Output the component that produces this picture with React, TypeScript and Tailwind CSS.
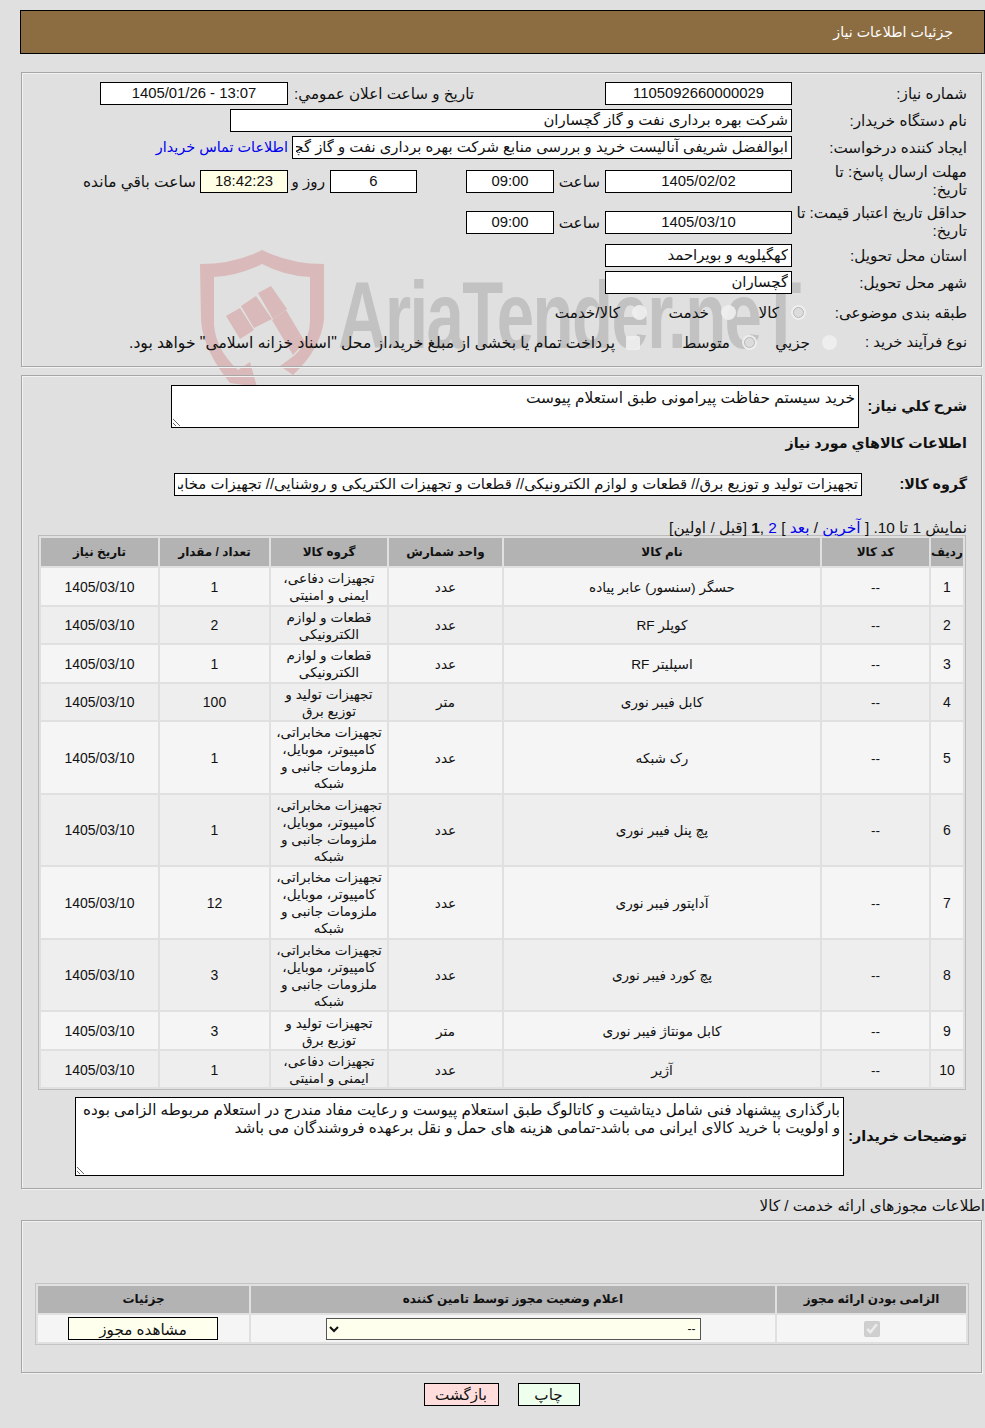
import React from "react";

const rows = [
  ["1", "--", "حسگر (سنسور) عابر پیاده", "عدد", "تجهیزات دفاعی، ایمنی و امنیتی", "1", "1405/03/10"],
  ["2", "--", "کوپلر RF", "عدد", "قطعات و لوازم الکترونیکی", "2", "1405/03/10"],
  ["3", "--", "اسپلیتر RF", "عدد", "قطعات و لوازم الکترونیکی", "1", "1405/03/10"],
  ["4", "--", "کابل فیبر نوری", "متر", "تجهیزات تولید و توزیع برق", "100", "1405/03/10"],
  ["5", "--", "رک شبکه", "عدد", "تجهیزات مخابراتی، کامپیوتر، موبایل، ملزومات جانبی و شبکه", "1", "1405/03/10"],
  ["6", "--", "پچ پنل فیبر نوری", "عدد", "تجهیزات مخابراتی، کامپیوتر، موبایل، ملزومات جانبی و شبکه", "1", "1405/03/10"],
  ["7", "--", "آداپتور فیبر نوری", "عدد", "تجهیزات مخابراتی، کامپیوتر، موبایل، ملزومات جانبی و شبکه", "12", "1405/03/10"],
  ["8", "--", "پچ کورد فیبر نوری", "عدد", "تجهیزات مخابراتی، کامپیوتر، موبایل، ملزومات جانبی و شبکه", "3", "1405/03/10"],
  ["9", "--", "کابل مونتاژ فیبر نوری", "متر", "تجهیزات تولید و توزیع برق", "3", "1405/03/10"],
  ["10", "--", "آژیر", "عدد", "تجهیزات دفاعی، ایمنی و امنیتی", "1", "1405/03/10"],
];

const Box = ({ className = "", children }: { className?: string; children: React.ReactNode }) => (
  <div className={`h-[23px] shrink-0 border border-black px-[3px] text-[14.85px] leading-[21px] ${className}`}>
    <div className="overflow-hidden whitespace-nowrap">{children}</div>
  </div>
);

const Radio = ({ label, checked, className = "" }: { label: string; checked?: boolean; className?: string }) => (
  <div className={`flex items-center ${className}`}>
    <span className="flex h-[15px] w-[15px] shrink-0 items-center justify-center rounded-full bg-[#f0f0f0]/90">
      {checked && <span className="h-[11px] w-[11px] rounded-full border border-[#b8b8b8] bg-[#dcdcdc]" />}
    </span>
    <span className="mr-[12px] whitespace-nowrap">{label}</span>
  </div>
);

const sectionClass = "mr-[3px] ml-[21px] border border-[#a6a6a6] shadow-[inset_1px_1px_0_#f2f2f2,1px_1px_0_#f2f2f2]";

export default function App() {
  return (
    <div dir="rtl" className="relative h-[1428px] w-[985px] overflow-hidden bg-[#e0e0e0] font-['Liberation_Sans','DejaVu_Sans',sans-serif] text-[15.2px] leading-[17px] text-[#111]">
      {/* watermark */}
      <svg viewBox="0 0 125 140" className="absolute left-[200px] top-[250px] h-[140px] w-[125px]">
        <path d="M0 14 Q35 14 62 0 Q90 14 124 14 L124 70 Q120 100 93 125 L80 116 L95 105 Q110 90 110 70 L110 27 Q85 26 62 14 Q38 26 14 27 L14 75 Q16 100 38 120 L50 112 L57 137 L30 133 Q3 100 1 70 Z" fill="#d9b9b9" />
        <path d="M26 66 L40 58 L54 80 L40 89 Z M41 56 L56 46 L72 69 L54 78 Z M58 43 L71 36 L87 59 L73 69 Z M72 70 L86 60 L105 92 L93 105 Z" fill="#d9b9b9" />
      </svg>
      <div dir="ltr" className="absolute left-[338px] top-[268px] origin-top-left scale-x-[0.8] scale-y-[1.12] whitespace-nowrap font-['Liberation_Sans',sans-serif] text-[84px] font-bold leading-[84px] tracking-[-2px] text-[#c2c2c2]">
        AriaTender.neT
      </div>

      <div className="relative">
        {/* title bar */}
        <div className="ml-[20px] mt-[10px] flex h-[44px] items-center border border-black bg-[#8c6d42] pr-[31px] text-[14.2px] text-white">
          جزئیات اطلاعات نیاز
        </div>

        {/* request info */}
        <div className={`${sectionClass} mt-[18px] h-[295px] pt-[9px]`}>
          <div className="flex items-center">
            <div className="w-[189px] shrink-0 pr-[14px]">شماره نیاز:</div>
            <Box className="w-[187px] bg-white text-center">1105092660000029</Box>
            <div className="mr-[131px] w-[186px] shrink-0 whitespace-nowrap">تاریخ و ساعت اعلان عمومي:</div>
            <Box className="w-[188px] bg-white text-center"><span dir="ltr">1405/01/26 - 13:07</span></Box>
          </div>
          <div className="mt-[4px] flex items-center">
            <div className="w-[189px] shrink-0 pr-[14px]">نام دستگاه خریدار:</div>
            <Box className="w-[562px] bg-white">شرکت بهره برداری نفت و گاز گچساران</Box>
          </div>
          <div className="mt-[4px] flex items-center">
            <div className="w-[189px] shrink-0 pr-[14px]">ایجاد کننده درخواست:</div>
            <Box className="w-[500px] bg-white">ابوالفضل شریفی آنالیست خرید و بررسی منابع شرکت بهره برداری نفت و گاز گچساران</Box>
            <a className="mr-[4px] whitespace-nowrap text-[14.4px] text-[#0000ee]">اطلاعات تماس خریدار</a>
          </div>
          <div className="mt-[4px] flex items-center">
            <div className="w-[189px] shrink-0 pr-[14px] leading-[18px]">مهلت ارسال پاسخ: تا<br />تاریخ:</div>
            <Box className="w-[187px] bg-white text-center">1405/02/02</Box>
            <div className="mr-[5px] w-[46px] shrink-0">ساعت</div>
            <Box className="w-[88px] bg-white text-center">09:00</Box>
            <Box className="mr-[49px] w-[87px] bg-white text-center">6</Box>
            <div className="mr-[5px] w-[37px] shrink-0">روز و</div>
            <Box className="w-[88px] bg-[#ffffe6] text-center">18:42:23</Box>
            <div className="mr-[4px] whitespace-nowrap text-[15.4px]">ساعت باقي مانده</div>
          </div>
          <div className="mt-[5px] flex items-center">
            <div className="w-[189px] shrink-0 whitespace-nowrap pr-[14px] leading-[18px]">حداقل تاریخ اعتبار قیمت: تا<br />تاریخ:</div>
            <Box className="w-[187px] bg-white text-center">1405/03/10</Box>
            <div className="mr-[5px] w-[46px] shrink-0">ساعت</div>
            <Box className="w-[88px] bg-white text-center">09:00</Box>
          </div>
          <div className="mt-[4px] flex items-center">
            <div className="w-[189px] shrink-0 pr-[14px]">استان محل تحویل:</div>
            <Box className="w-[187px] bg-white">کهگیلویه و بویراحمد</Box>
          </div>
          <div className="mt-[4px] flex items-center">
            <div className="w-[189px] shrink-0 pr-[14px]">شهر محل تحویل:</div>
            <Box className="w-[187px] bg-white">گچساران</Box>
          </div>
          <div className="mt-[10px] flex h-[17px] items-center">
            <div className="w-[175px] shrink-0 whitespace-nowrap pr-[14px]">طبقه بندی موضوعی:</div>
            <Radio label="کالا" checked className="w-[70px]" />
            <Radio label="خدمت" className="w-[89px]" />
            <Radio label="کالا/خدمت" />
          </div>
          <div className="mt-[13px] flex h-[17px] items-center">
            <div className="w-[144px] shrink-0 whitespace-nowrap pr-[14px] text-[14.8px]">نوع فرآیند خرید :</div>
            <Radio label="جزیي" className="w-[80px]" />
            <Radio label="متوسط" checked className="w-[117px]" />
            <span className="h-[14px] w-[14px] shrink-0 rounded-[2px] bg-[#f0f0f0]/90" />
            <div className="mr-[11px] whitespace-nowrap text-[15.6px]">پرداخت تمام یا بخشی از مبلغ خرید،از محل "اسناد خزانه اسلامی" خواهد بود.</div>
          </div>
        </div>

        {/* goods */}
        <div className={`${sectionClass} mt-[8px] h-[814px] pt-[9px]`}>
          <div className="flex items-start">
            <div className="w-[122px] shrink-0 whitespace-nowrap pr-[14px] pt-[13px] text-[14.3px] font-bold">شرح کلي نیاز:</div>
            <textarea readOnly defaultValue="خرید سیستم حفاظت پیرامونی طبق استعلام پیوست" className="h-[43px] w-[688px] border border-black bg-white px-[3px] pt-[3px] text-[15.4px] leading-[18px] outline-none" />
          </div>
          <div className="mt-[5px] pr-[14px] text-[14.3px] font-bold leading-[20px]">اطلاعات کالاهاي مورد نیاز</div>
          <div className="mt-[20px] flex items-center">
            <div className="w-[119px] shrink-0 pr-[14px] text-[14.3px] font-bold">گروه کالا:</div>
            <Box className="w-[688px] bg-white">
              تجهیزات تولید و توزیع برق// قطعات و لوازم الکترونیکی// قطعات و تجهیزات الکتریکی و روشنایی// تجهیزات مخابراتی
            </Box>
          </div>
          <div className="mt-[23px] pr-[14px] text-[15.4px]">
            نمایش 1 تا 10. [ <a className="text-[#0000ee]">آخرین</a> / <a className="text-[#0000ee]">بعد</a> ] <a className="text-[#0000ee]">2</a> ,<b>1</b> [قبل / اولین]
          </div>
          <div className="mr-[15px] mt-[-1px]">
            <table className="w-[928px] table-fixed border-separate border-spacing-[2px] border border-[#bbb] text-center text-[13.6px]">
              <colgroup>
                <col className="w-[32px]" />
                <col className="w-[107px]" />
                <col className="w-[316px]" />
                <col className="w-[113px]" />
                <col className="w-[116px]" />
                <col className="w-[109px]" />
                <col />
              </colgroup>
              <thead>
                <tr className="h-[28px] bg-[#b3b3b3] text-[12px]">
                  {["ردیف", "کد کالا", "نام کالا", "واحد شمارش", "گروه کالا", "تعداد / مقدار", "تاریخ نیاز"].map((h) => (
                    <th key={h} className="p-0 font-bold">{h}</th>
                  ))}
                </tr>
              </thead>
              <tbody>
                {rows.map((r, i) => (
                  <tr key={r[0]} className={i % 2 === 0 ? "bg-[#f5f5f5]" : "bg-[#eeeeee]"}>
                    {r.map((c, j) => (
                      <td key={j} className={`pb-[0.28px] pt-[2.28px] ${j === 4 ? "px-[3px]" : "px-[1px]"} ${j === 0 || j === 5 || j === 6 ? "text-[14px]" : ""}`}>{c}</td>
                    ))}
                  </tr>
                ))}
              </tbody>
            </table>
          </div>
          <div className="mt-[7px] flex items-center">
            <div className="w-[137px] shrink-0 whitespace-nowrap pr-[14px] text-[14.3px] font-bold">توضیحات خریدار:</div>
            <textarea
              readOnly
              defaultValue="بارگذاری پیشنهاد فنی شامل دیتاشیت و کاتالوگ طبق استعلام پیوست و رعایت مفاد مندرج در استعلام مربوطه الزامی بوده و اولویت با خرید کالای ایرانی می باشد-تمامی هزینه های حمل و نقل برعهده فروشندگان می باشد"
              className="h-[79px] w-[769px] border border-black bg-white px-[3px] pt-[3px] text-[15.2px] leading-[18px] outline-none"
            />
          </div>
        </div>

        <div className="mt-[8px]">اطلاعات مجوزهای ارائه خدمت / کالا</div>

        {/* licences */}
        <div className={`${sectionClass} mt-[6px] h-[153px] pr-[12px] pt-[62px]`}>
          <table className="w-[934px] table-fixed border-separate border-spacing-[2px] border border-[#c4c4c4] text-center text-[12px]">
            <colgroup>
              <col className="w-[189px]" />
              <col className="w-[524px]" />
              <col />
            </colgroup>
            <thead>
              <tr className="h-[27px] bg-[#b3b3b3]">
                <th className="p-0 font-bold">الزامی بودن ارائه مجوز</th>
                <th className="p-0 font-bold">اعلام وضعیت مجوز توسط تامین کننده</th>
                <th className="p-0 font-bold">جزئیات</th>
              </tr>
            </thead>
            <tbody>
              <tr className="h-[27px] bg-[#f5f5f5]">
                <td className="p-0">
                  <input type="checkbox" checked disabled readOnly className="h-[16px] w-[16px] align-middle" />
                </td>
                <td className="p-0">
                  <select className="mx-auto block h-[22px] w-[375px] rounded-none border border-[#555] bg-[#ffffee] text-[12px]">
                    <option>--</option>
                  </select>
                </td>
                <td className="p-0">
                  <button className="mr-[31px] block h-[23px] w-[150px] border border-black bg-[#ffffee] pt-[2px] text-[15.2px]">مشاهده مجوز</button>
                </td>
              </tr>
            </tbody>
          </table>
        </div>

        <div dir="ltr" className="mt-[10px] flex justify-center pl-[18px]">
          <button className="h-[23px] w-[75px] border border-black bg-[#ffdddd] text-[15.2px]">بازگشت</button>
          <button className="ml-[19px] h-[23px] w-[62px] border border-black bg-[#eeffee] text-[15.2px]">چاپ</button>
        </div>
      </div>
    </div>
  );
}
